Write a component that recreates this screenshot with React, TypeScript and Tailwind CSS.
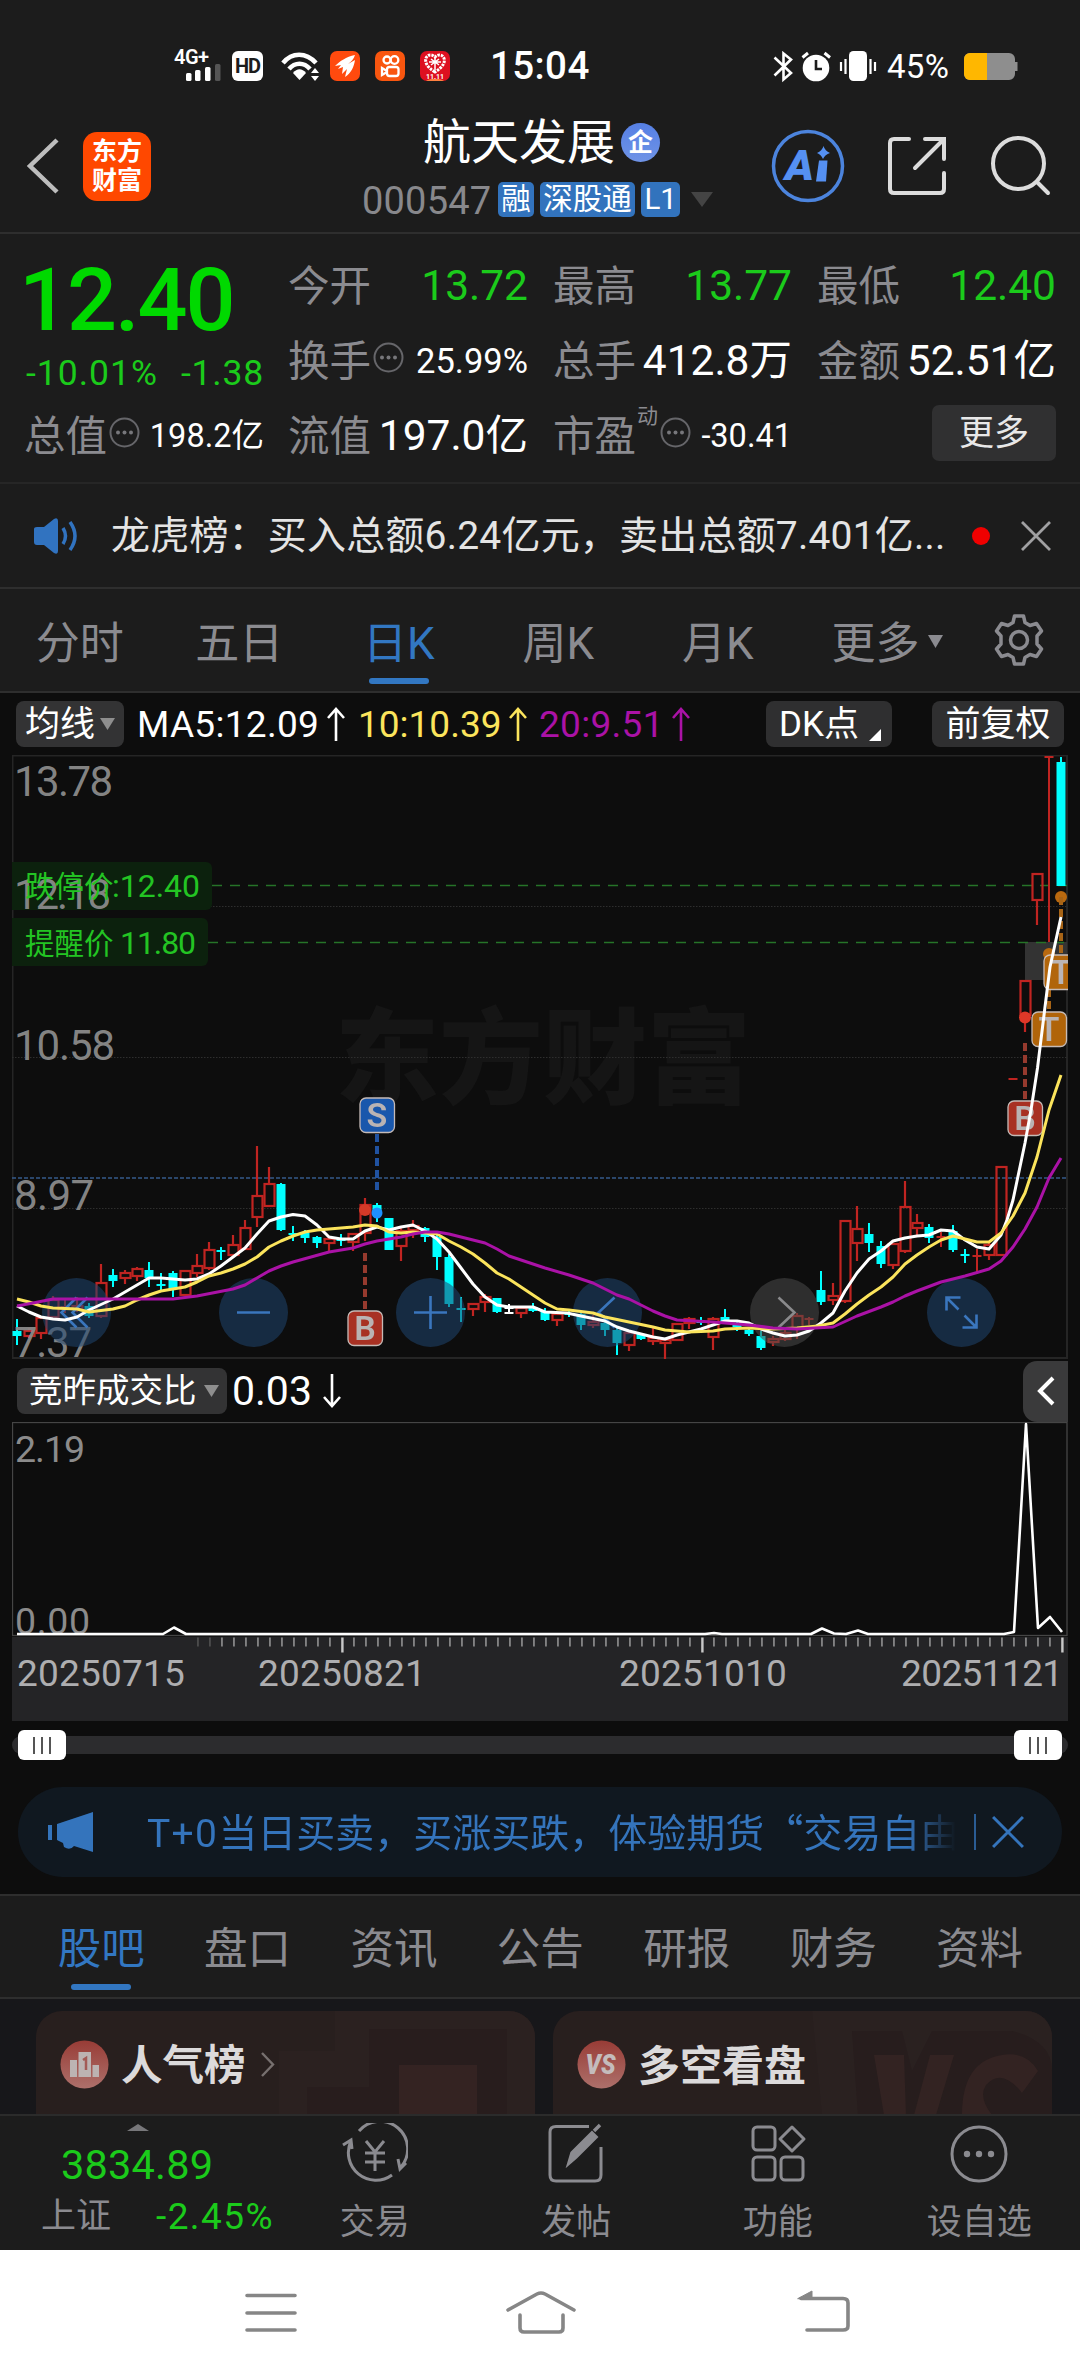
import type { ReactNode } from 'react';
import clsx from 'clsx';

type Kind = 'up' | 'down' | 'flat';
// index, kind, high, body top, body bottom, low
type Candle = [number, Kind, number, number, number, number];
type Point = [number, number];

const CANDLES: Candle[] = [
  [0, 'down', 1319, 1331, 1336, 1345],
  [1, 'up', 1328, 1331, 1336, 1338],
  [2, 'up', 1317, 1318, 1333, 1339],
  [3, 'up', 1296, 1300, 1317, 1318],
  [4, 'up', 1298, 1306, 1308, 1313],
  [5, 'up', 1297, 1306, 1309, 1312],
  [6, 'down', 1303, 1306, 1316, 1318],
  [7, 'up', 1264, 1283, 1316, 1318],
  [8, 'down', 1269, 1275, 1281, 1287],
  [9, 'up', 1270, 1273, 1278, 1284],
  [10, 'up', 1267, 1269, 1276, 1281],
  [11, 'down', 1262, 1270, 1278, 1287],
  [12, 'down', 1273, 1284, 1286, 1291],
  [13, 'down', 1271, 1273, 1289, 1297],
  [14, 'up', 1271, 1271, 1295, 1296],
  [15, 'up', 1254, 1266, 1273, 1277],
  [16, 'up', 1242, 1250, 1268, 1270],
  [17, 'down', 1247, 1250, 1252, 1260],
  [18, 'up', 1235, 1245, 1255, 1257],
  [19, 'up', 1220, 1228, 1249, 1249],
  [20, 'up', 1146, 1196, 1217, 1227],
  [21, 'up', 1167, 1184, 1206, 1207],
  [22, 'down', 1183, 1184, 1230, 1231],
  [23, 'down', 1226, 1233, 1235, 1241],
  [24, 'down', 1230, 1233, 1238, 1243],
  [25, 'down', 1236, 1237, 1243, 1248],
  [26, 'up', 1237, 1239, 1243, 1251],
  [27, 'down', 1234, 1239, 1241, 1246],
  [28, 'up', 1233, 1234, 1242, 1251],
  [29, 'up', 1198, 1205, 1233, 1241],
  [30, 'down', 1203, 1205, 1215, 1222],
  [31, 'down', 1218, 1218, 1250, 1250],
  [32, 'up', 1228, 1231, 1246, 1261],
  [33, 'up', 1220, 1226, 1230, 1238],
  [34, 'down', 1227, 1228, 1237, 1242],
  [35, 'down', 1235, 1237, 1257, 1270],
  [36, 'down', 1254, 1257, 1304, 1307],
  [37, 'down', 1297, 1308, 1310, 1322],
  [38, 'up', 1303, 1304, 1309, 1316],
  [39, 'up', 1294, 1297, 1302, 1312],
  [40, 'down', 1298, 1298, 1312, 1313],
  [41, 'flat', 1304, 1307, 1312, 1314],
  [42, 'up', 1307, 1308, 1313, 1318],
  [43, 'down', 1303, 1307, 1311, 1312],
  [44, 'down', 1308, 1311, 1320, 1321],
  [45, 'up', 1312, 1314, 1320, 1326],
  [46, 'down', 1310, 1313, 1314, 1317],
  [47, 'down', 1312, 1314, 1325, 1330],
  [48, 'up', 1315, 1322, 1325, 1328],
  [49, 'down', 1320, 1323, 1330, 1336],
  [50, 'down', 1328, 1330, 1343, 1355],
  [51, 'up', 1332, 1333, 1345, 1351],
  [52, 'down', 1333, 1334, 1339, 1340],
  [53, 'up', 1328, 1338, 1341, 1345],
  [54, 'up', 1339, 1340, 1343, 1359],
  [55, 'up', 1323, 1324, 1340, 1341],
  [56, 'up', 1317, 1319, 1323, 1329],
  [57, 'down', 1317, 1321, 1323, 1325],
  [58, 'up', 1317, 1319, 1337, 1350],
  [59, 'down', 1309, 1317, 1321, 1321],
  [60, 'down', 1322, 1325, 1326, 1331],
  [61, 'down', 1328, 1330, 1334, 1336],
  [62, 'down', 1331, 1336, 1348, 1350],
  [63, 'up', 1336, 1339, 1342, 1346],
  [64, 'up', 1330, 1333, 1339, 1341],
  [65, 'up', 1313, 1316, 1328, 1339],
  [66, 'up', 1317, 1318, 1319, 1325],
  [67, 'down', 1271, 1290, 1302, 1305],
  [68, 'up', 1283, 1296, 1300, 1305],
  [69, 'up', 1220, 1221, 1301, 1303],
  [70, 'up', 1206, 1229, 1243, 1261],
  [71, 'down', 1223, 1234, 1243, 1252],
  [72, 'down', 1241, 1246, 1264, 1268],
  [73, 'up', 1243, 1244, 1265, 1269],
  [74, 'up', 1181, 1207, 1251, 1253],
  [75, 'up', 1214, 1223, 1228, 1235],
  [76, 'down', 1224, 1227, 1238, 1243],
  [77, 'up', 1232, 1236, 1238, 1247],
  [78, 'down', 1225, 1231, 1250, 1252],
  [79, 'down', 1249, 1254, 1256, 1263],
  [80, 'up', 1249, 1255, 1257, 1274],
  [81, 'up', 1243, 1245, 1255, 1260],
  [82, 'up', 1166, 1167, 1255, 1256],
  [83, 'up', 1078, 1078, 1079, 1079],
  [84, 'up', 980, 981, 1015, 1032],
  [85, 'up', 873, 874, 900, 925],
  [86, 'up', 756, 756, 757, 942],
  [87, 'down', 757, 762, 886, 886],
];

const MA5: Point[] = [
  [17, 1306], [29, 1312], [41, 1317], [53, 1319], [65, 1320], [77, 1317], [89, 1310], [113, 1299],
  [137, 1285], [149, 1278], [161, 1278], [173, 1279], [185, 1280], [197, 1279], [209, 1274],
  [221, 1266], [233, 1257], [245, 1248], [257, 1234], [269, 1221], [281, 1217], [293, 1214.5],
  [305, 1216], [317, 1225], [329, 1237], [341, 1239], [353, 1239], [365, 1231], [377, 1227],
  [389, 1230], [401, 1227], [413, 1225], [425, 1231], [437, 1239], [449, 1252], [461, 1268],
  [473, 1284], [485, 1297], [497, 1305], [509, 1307], [533, 1307], [545, 1312], [567, 1313],
  [581, 1316], [605, 1321], [617, 1327], [629, 1331], [653, 1337], [665, 1339], [677, 1335],
  [689, 1332], [701, 1329], [713, 1325], [725, 1321], [737, 1321], [749, 1323], [761, 1329],
  [773, 1333], [785, 1336], [797, 1335], [809, 1331], [821, 1323], [833, 1313], [845, 1291],
  [857, 1273], [869, 1259], [881, 1251], [893, 1241], [905, 1238], [917, 1236], [929, 1235],
  [941, 1230], [953, 1231], [965, 1240], [977, 1247], [989, 1249], [1001, 1235], [1007, 1220],
  [1013, 1200], [1025, 1143], [1031, 1110], [1037.5, 1068], [1045, 1007], [1050, 967], [1061, 917],
];

const MA10: Point[] = [
  [17, 1299], [29, 1302], [41, 1306], [53, 1308], [77, 1309], [89, 1312], [113, 1309], [125, 1306],
  [137, 1300], [149, 1295], [161, 1291], [173, 1289], [185, 1287], [197, 1282], [209, 1276],
  [221, 1273], [233, 1269], [245, 1264], [257, 1257], [269, 1247], [281, 1241], [293, 1236],
  [305, 1232], [317, 1230], [353, 1227], [365, 1225], [377, 1226], [389, 1232], [401, 1233],
  [413, 1232], [437, 1234], [449, 1241], [461, 1247], [473, 1254], [485, 1263], [497, 1273],
  [509, 1279], [521, 1287], [533, 1295], [545, 1303], [557, 1309], [569, 1310], [593, 1313],
  [605, 1317], [629, 1322], [653, 1327], [665, 1330], [689, 1332], [713, 1331], [725, 1329],
  [749, 1328], [773, 1329], [797, 1328], [818, 1326], [833, 1323], [845, 1314], [857, 1304],
  [869, 1295], [881, 1287], [893, 1277], [905, 1264], [917, 1255], [929, 1247], [941, 1240],
  [953, 1236], [965, 1239], [977, 1242], [989, 1242], [1001, 1233], [1013, 1216], [1025, 1193],
  [1037, 1157], [1049, 1110], [1061, 1075],
];

const MA20: Point[] = [
  [17, 1306], [33, 1303], [53, 1299], [173, 1299], [197, 1296], [233, 1289], [245, 1285],
  [257, 1278], [269, 1271], [281, 1266], [293, 1262], [329, 1252], [353, 1248], [365, 1244],
  [377, 1241], [401, 1237], [413, 1234], [425, 1232], [437, 1232], [449, 1234], [485, 1243],
  [497, 1249], [509, 1256], [545, 1268], [569, 1275], [593, 1283], [617, 1295], [629, 1299],
  [653, 1311], [665, 1316], [677, 1320], [713, 1322], [725, 1323], [749, 1325], [773, 1328],
  [797, 1329], [833, 1327], [857, 1316], [881, 1307], [893, 1302], [905, 1296], [917, 1291],
  [941, 1282], [965, 1276], [989, 1269], [1001, 1261], [1013, 1247], [1025, 1229], [1037, 1207],
  [1049, 1178], [1061, 1158],
];

const RATIO: Point[] = [
  [17, 1634], [163, 1634], [174, 1627.5], [186, 1634], [705, 1634], [714, 1633], [722, 1634],
  [811, 1634], [822, 1628.5], [834, 1633.5], [846, 1634], [858, 1630.5], [868, 1634], [1004, 1634],
  [1014, 1632], [1026, 1424], [1038, 1628], [1050, 1617], [1062, 1632],
];

const toPoints = (pts: Point[]) => pts.map(p => p.join(',')).join(' ');

const COLORS: Record<Kind, string> = { up: '#c02421', down: '#00ffff', flat: '#ffffff' };

function CandleShape({ candle }: { candle: Candle }) {
  const [i, kind, high, top, bottom, low] = candle;
  const x = 17 + i * 12;
  const color = COLORS[kind];
  if (kind === 'down') {
    return (
      <g fill={color}>
        <rect x={x - 1} y={high} width={2} height={low - high} />
        <rect x={x - 4.5} y={top} width={9} height={Math.max(bottom - top, 2)} />
      </g>
    );
  }
  if (kind === 'flat' || bottom - top < 3) {
    return (
      <g fill={color}>
        <rect x={x - 1} y={high} width={2} height={low - high} />
        <rect x={x - 4.5} y={top} width={9} height={2} />
        {kind === 'flat' && <rect x={x - 4.5} y={bottom} width={9} height={2} />}
      </g>
    );
  }
  return (
    <g stroke={color} strokeWidth={2.2} fill="none">
      <path d={`M${x} ${high}V${top}M${x} ${bottom}V${low}`} />
      <rect x={x - 4.5} y={top} width={10} height={bottom - top} />
    </g>
  );
}

function Marker({ x, y, label, fill }: { x: number; y: number; label: string; fill: string }) {
  return (
    <g opacity={0.95}>
      <rect x={x - 17} y={y - 17} width={34.5} height={34.5} rx={6} fill={fill} stroke="#cfc4c0" strokeWidth={1.3} />
      <text x={x} y={y + 12} textAnchor="middle" fontSize={34} fontWeight={600} fill="#c3bcbc">{label}</text>
    </g>
  );
}

function RoundTool({ x, gray, d }: { x: number; gray?: boolean; d: string }) {
  return (
    <g>
      <circle cx={x} cy={1312.5} r={34.5} fill={gray ? '#4a4a4a' : '#1f4570'} opacity={0.55} />
      <path d={d} transform={`translate(${x} 1312.5)`} fill="none" stroke={gray ? '#8a8a8c' : '#3a76bd'} strokeWidth={2.6} />
    </g>
  );
}

const AXIS = [
  { y: 796, label: '13.78', width: 99 },
  { y: 909, label: '12.18', width: 97 },
  { y: 1060, label: '10.58', width: 101 },
  { y: 1210, label: '8.97', width: 80 },
  { y: 1357, label: '7.37', width: 78 },
];

function KLineChart() {
  return (
    <svg className="ml-3 block font-['Roboto','Noto_Sans_CJK_SC',sans-serif]" width={1056} height={605} viewBox="12 755 1056 605">
      <path d="M12.5 1358V755.5H1067V1358Z" fill="none" stroke="#252525" strokeWidth={2} />
      <text x={335} y={1096} fontSize={104} fontWeight={800} fill="#151515">东方财富</text>
      {[906.5, 1057.5, 1208.5].map(y => (
        <path key={y} d={`M12 ${y}H1067`} stroke="#2e2e2e" strokeDasharray="1.5 1.5" />
      ))}
      <path d="M12 1178H1066" stroke="#34598a" strokeDasharray="4 2" strokeWidth={1.4} />
      <rect x={1025} y={942} width={42} height={38} fill="#333333" />

      <path d="M12 862H206a6 6 0 0 1 6 6V904a6 6 0 0 1 -6 6H12Z" fill="#0c210d" />
      <path d="M12 918H202a6 6 0 0 1 6 6V960a6 6 0 0 1 -6 6H12Z" fill="#0c210d" />
      <path d="M212 885.5H1067M208 942.5H1067" stroke="#267328" strokeWidth={1.6} strokeDasharray="10 8" />

      {CANDLES.map(c => <CandleShape key={c[0]} candle={c} />)}

      <circle cx={365} cy={1210} r={6} fill="#d63a28" />
      <circle cx={377} cy={1213} r={5.5} fill="#1e90ff" />
      <circle cx={1025} cy={1017.5} r={6} fill="#e03828" />
      <circle cx={1061} cy={897} r={6} fill="#b9690f" />
      <circle cx={1049} cy={954} r={6} fill="#b9690f" />
      <g fill="none" strokeWidth={4} strokeDasharray="8 4">
        <path d="M377 1134V1190" stroke="#2052a0" />
        <path d="M365 1253V1310" stroke="#963a2e" />
        <path d="M1025 1043V1100" stroke="#963a2e" />
        <path d="M1061 897V954M1049 989V1012" stroke="#a76416" />
      </g>

      {AXIS.map(a => (
        <text key={a.label} x={14} y={a.y} fontSize={42} fill="#8b8b8b" fillOpacity={0.95} textLength={a.width}>{a.label}</text>
      ))}
      <g fontSize={29.5} fill="#23c423">
        <text x={25} y={896.5}>跌停价</text>
        <text x={112} y={896.5} fontSize={32} textLength={88}>:12.40</text>
        <text x={25} y={953.5}>提醒价</text>
        <text x={120} y={953.5} fontSize={32} textLength={76}>11.80</text>
      </g>

      <Marker x={377} y={1115} label="S" fill="#1a5bb5" />
      <Marker x={365} y={1328} label="B" fill="#b13325" />
      <Marker x={1025} y={1118} label="B" fill="#b13325" />
      <Marker x={1061} y={972} label="T" fill="#b9690a" />
      <Marker x={1049} y={1029} label="T" fill="#b9690a" />

      <RoundTool x={76.5} d="M0 -15L-15 0L0 15M11 -15L-4 0L11 15" />
      <RoundTool x={253.5} d="M-16.5 0H16.5" />
      <RoundTool x={430.5} d="M-16.5 0H16.5M0 -16.5V16.5" />
      <RoundTool x={607.5} d="M7 -15L-9 0L7 15" />
      <RoundTool x={784.5} gray d="M-6 -15L10 0L-6 15" />
      <RoundTool x={961.5} d="M-15 -2V-15H-1M-15 -15L-3 -3M15 2V15H1M15 15L3 3" />

      <g fill="none" strokeWidth={3} strokeLinejoin="round">
        <polyline points={toPoints(MA5)} stroke="#ffffff" />
        <polyline points={toPoints(MA10)} stroke="#fbe45c" />
        <polyline points={toPoints(MA20)} stroke="#aa12a6" />
      </g>
    </svg>
  );
}

function RatioChart() {
  return (
    <svg className="ml-3 block font-['Roboto',sans-serif]" width={1056} height={215} viewBox="12 1422 1056 215">
      <rect x={12.5} y={1422.5} width={1054.5} height={213} fill="none" stroke="#454545" strokeWidth={1.3} />
      <text x={15} y={1462} fontSize={37.5} fill="#8b8b8b" textLength={70}>2.19</text>
      <text x={15} y={1634} fontSize={37.5} fill="#8b8b8b" textLength={75}>0.00</text>
      <polyline points={toPoints(RATIO)} fill="none" stroke="#ffffff" strokeWidth={2.6} strokeLinejoin="round" />
    </svg>
  );
}

function TimeAxis() {
  const ticks = Array.from({ length: 73 }, (_, k) => 1062 - 12 * k);
  return (
    <div className="ml-3 h-[84px] w-[1056px] bg-[#242426]">
      <svg className="block" width={1056} height={16} viewBox="12 1637 1056 16">
        {ticks.map((x, k) => (
          <rect key={x} x={x - 0.8} y={1637.5} width={k % 30 === 0 ? 2.4 : 1.5} height={k % 30 === 0 ? 15 : 9}
            fill={k % 30 === 0 ? '#c8c8c8' : k > 70 ? '#555555' : '#9a9a9a'} />
        ))}
      </svg>
      <div className="flex h-[40px] items-center pl-[5px] text-[37px] leading-none tracking-[0.2px] text-[#aeaeb0]">
        <span className="w-[241px]">20250715</span>
        <span className="w-[361px]">20250821</span>
        <span className="w-[282px]">20251010</span>
        <span className="tracking-[-0.6px]">20251121</span>
      </div>
    </div>
  );
}

function RangeSlider() {
  const handle = (
    <span className="flex h-[30px] w-12 items-center justify-center gap-[6px] rounded-[6px] bg-white">
      <i className="h-[17px] w-[2px] bg-[#555]" />
      <i className="h-[17px] w-[2px] bg-[#555]" />
      <i className="h-[17px] w-[2px] bg-[#555]" />
    </span>
  );
  return (
    <div className="mx-3 mt-[9px] flex h-[30px] items-center">
      <div className="flex h-[18px] w-full items-center justify-between rounded-full bg-[#2c2c2e] px-[6px]">
        {handle}
        {handle}
      </div>
    </div>
  );
}

function StatusBar() {
  return (
    <div className="flex h-[100px] items-start pl-[173px] pt-[48px] text-white">
      <svg width={50} height={34} viewBox="173 48 50 34" fill="#fff">
        <text x={174} y={64} fontSize={20} fontWeight={600} textLength={35} className="font-['Roboto',sans-serif]">4G+</text>
        <rect x={186} y={73} width={5.5} height={8} rx={1.5} />
        <rect x={195} y={70} width={5.5} height={11} rx={1.5} />
        <rect x={205} y={67} width={5.5} height={14} rx={1.5} />
        <rect x={215} y={64} width={5.5} height={17} rx={1.5} fill="#555" />
      </svg>
      <span className="ml-[9px] mt-[3px] flex h-[30px] w-[31px] items-center justify-center rounded-[6px] bg-white text-[20px] font-bold leading-none tracking-[-1px] text-[#1c1c1c]">HD</span>
      <svg className="ml-[18px] mt-[4px]" width={39} height={29} viewBox="0 0 39 29" fill="none" stroke="#fff" strokeWidth={4.5}>
        <path d="M2 11C11 0 25 0 35 11" />
        <path d="M8 17C14 10 23 10 29 17" />
        <path d="M12 21C16 16 21 16 25 21L18.5 28Z" fill="#fff" stroke="none" />
        <path d="M34 16L38 21H30ZM34 29L38 24H30Z" fill="#fff" stroke="none" />
      </svg>
      <svg className="ml-[10px] mt-[3px]" width={30} height={30} viewBox="0 0 30 30">
        <rect width={30} height={30} rx={7} fill="#ff4a0e" />
        <path d="M5 15C10 10 16 6 25 4C24 8 21 11 18 13L25 9C24 16 21 22 15 26L17 18L12 23L13 16L8 18L11 14Z" fill="#fff" />
      </svg>
      <svg className="ml-[15px] mt-[3px]" width={30} height={30} viewBox="0 0 30 30" fill="none" stroke="#fff" strokeWidth={2.3}>
        <rect width={30} height={30} rx={7} fill="#f9560f" stroke="none" />
        <circle cx={12} cy={9} r={3.5} />
        <circle cx={19.5} cy={9} r={3.8} />
        <rect x={12} y={16} width={11.5} height={9} rx={2.5} />
        <path d="M12 20L7 17V24L12 21" />
      </svg>
      <svg className="ml-[15px] mt-[3px]" width={30} height={30} viewBox="0 0 30 30">
        <rect width={30} height={30} rx={7} fill="#dd1020" />
        <path d="M6 30C10 27 20 27 24 30Z" fill="#ff8040" />
        <path d="M15 21C-2 11 8 -1 15 6C22 -1 32 11 15 21Z" fill="none" stroke="#fff" strokeWidth={3} strokeDasharray="2.5 1" />
        <path d="M11 8L19 14M19 8L11 14M15 6V19M9 11H21" stroke="#fff" strokeWidth={1.5} />
        <text x={15} y={28} textAnchor="middle" fontSize={7} fontWeight={700} fill="#fff">11.11</text>
      </svg>
      <span className="ml-[40px] mt-[-1px] w-[98px] whitespace-nowrap text-[38.5px] font-medium leading-[38px] tracking-[0.4px]">15:04</span>
      <svg className="ml-[185px] mt-[3px]" width={104} height={32} viewBox="774 51 104 32" fill="none" stroke="#fff" strokeWidth={2.6}>
        <path d="M775.5 57.5L792 73L784.5 79.5V53.5L792 59.5L775.5 75.5" />
        <circle cx={817} cy={68} r={13.3} fill="#fff" stroke="none" />
        <path d="M803.500 57.500L809 53M831 57.500L825.500 53" strokeWidth={3} />
        <path d="M817 60V69H823" stroke="#1c1c1c" />
        <rect x={850} y={51} width={18} height={30} rx={4.5} fill="#fff" stroke="none" />
        <path d="M842 62V71M846.500 59V74M871.500 59V74M876 62V71" strokeWidth={2.200} />
      </svg>
      <span className="ml-[10px] mt-[3px] w-[65px] whitespace-nowrap text-[33px] leading-[32px] tracking-[0.3px]">45%</span>
      <svg className="ml-[12px] mt-[5px]" width={54} height={27} viewBox="0 0 54 27">
        <path d="M6 0H45a6 6 0 0 1 6 6V9H53.500V18H51V21a6 6 0 0 1 -6 6H6a6 6 0 0 1 -6 -6V6a6 6 0 0 1 6 -6Z" fill="#8e8e8e" />
        <path d="M6 0H23V27H6a6 6 0 0 1 -6 -6V6a6 6 0 0 1 6 -6Z" fill="#ffb700" />
      </svg>
    </div>
  );
}

function Tag({ children }: { children: ReactNode }) {
  return (
    <span className="flex h-[35px] items-center whitespace-nowrap rounded-[5px] bg-[#3273bd] px-[3px] text-[29.5px] leading-none text-white">{children}</span>
  );
}

function Header() {
  return (
    <header className="flex h-[134px] items-center border-b-2 border-[#2e2e2e]">
      <svg className="ml-[26px] shrink-0" width={34} height={56} viewBox="0 0 34 56" fill="none" stroke="#bdbdbd" strokeWidth={4.5}>
        <path d="M31 2L4 28L31 54" />
      </svg>
      <div className="ml-[23px] flex h-[69px] w-[68px] shrink-0 flex-col items-center justify-center rounded-[14px] bg-[#ff4800] text-[25px] font-bold leading-[29px] text-white">
        <span>东方</span>
        <span>财富</span>
      </div>
      <div className="ml-[211px] flex w-[352px] shrink-0 flex-col">
        <div className="flex h-[56px] items-center pl-[61px]">
          <span className="text-[48px] leading-none text-white">航天发展</span>
          <span className="ml-[6px] flex h-[39px] w-[39px] items-center justify-center rounded-full bg-gradient-to-b from-[#5680e4] to-[#6f93e6] text-[25px] font-bold leading-none text-white">企</span>
        </div>
        <div className="mt-[11px] flex h-[36px] items-center">
          <span className="mt-[2px] text-[38px] leading-none tracking-[0.2px] text-[#88888c]">000547</span>
          <span className="ml-[7px] flex shrink-0 gap-[6.5px]">
            <Tag>融</Tag>
            <Tag>深股通</Tag>
            <Tag>L1</Tag>
          </span>
          <svg className="ml-[11px] shrink-0" width={22} height={16} viewBox="0 0 22 16"><path d="M0 0H22L11 15Z" fill="#444" /></svg>
        </div>
      </div>
      <svg className="ml-[57px] shrink-0" width={74} height={74} viewBox="0 0 74 74">
        <circle cx={37} cy={37} r={34.500} fill="none" stroke="#4c84dd" strokeWidth={3.5} />
        <text x={14} y={51} fontSize={42} fontWeight={900} fontStyle="italic" fill="#5590f2" textLength={29} lengthAdjust="spacingAndGlyphs" className="font-['Roboto',sans-serif]">A</text>
        <path d="M48 31.500H56.500L55 52.500H45Z" fill="#5590f2" />
        <path d="M52.500 17Q54 22 59 24Q54 25.500 52 30Q50 25.500 46 24Q51 22 52.500 17Z" fill="#5590f2" />
      </svg>
      <svg className="ml-[43px] shrink-0" width={58} height={58} viewBox="0 0 58 58" fill="none" stroke="#dcdcdc" strokeWidth={4} strokeLinecap="round">
        <path d="M21 2H6Q2 2 2 6V52Q2 56 6 56H52Q56 56 56 52V36" />
        <path d="M37 2H56V22M55 3L27 31" />
      </svg>
      <svg className="ml-[45px] shrink-0" width={62} height={62} viewBox="0 0 62 62" fill="none" stroke="#dcdcdc" strokeWidth={4} strokeLinecap="round">
        <circle cx={27.5} cy={28.5} r={25.5} />
        <path d="M46 47L57 58" />
      </svg>
    </header>
  );
}

function Info() {
  return (
    <svg className="mb-[8px] ml-[2px] shrink-0" width={31} height={31} viewBox="0 0 31 31">
      <circle cx={15.5} cy={15.5} r={14} fill="none" stroke="#66666a" strokeWidth={2} />
      <g fill="#77777b">
        <circle cx={9} cy={15.5} r={2} />
        <circle cx={15.5} cy={15.5} r={2} />
        <circle cx={22} cy={15.5} r={2} />
      </g>
    </svg>
  );
}

interface StatProps {
  label: string;
  value?: string;
  info?: boolean;
  sup?: string;
  tone?: 'green' | 'white';
  size?: 'lg' | 'md' | 'sm';
}

const SIZES = { lg: 'text-[42.5px]', md: 'text-[34.5px]', sm: 'text-[32.5px]' };

function Stat({ label, value, info, sup, tone = 'white', size = 'lg' }: StatProps) {
  return (
    <div className="flex h-[75px] items-center whitespace-nowrap leading-none">
      <span className="text-[41.5px] text-[#8b8b90]">{label}</span>
      {sup && <span className="mb-[40px] ml-[1px] text-[21px] text-[#8b8b90]">{sup}</span>}
      {info && <Info />}
      <span className={clsx('ml-auto', SIZES[size], tone === 'green' ? 'text-[#1bcb1b]' : 'text-white')}>
        {value}
      </span>
    </div>
  );
}

function Quote() {
  return (
    <section className="flex h-[250px] border-b-2 border-[#262626] pl-[24px] pt-[15px]">
      <div className="w-[240px]">
        <div className="h-[150px] leading-none">
          <div className="ml-[-5px] pt-[7px] text-[88px] font-medium tracking-[-2px] text-[#00d900]">12.40</div>
          <div className="mt-[12px] flex justify-between whitespace-nowrap pl-[2px] text-[35.5px] text-[#1bcb1b]">
            <span className="tracking-[1px]">-10.01%</span>
            <span className="tracking-[0.8px]">-1.38</span>
          </div>
        </div>
        <Stat label="总值" info value="198.2亿" size="sm" />
      </div>
      <div className="ml-[24px] w-[240px]">
        <Stat label="今开" value="13.72" tone="green" />
        <Stat label="换手" info value="25.99%" size="md" />
        <Stat label="流值" value="197.0亿" />
      </div>
      <div className="ml-[25px] w-[239px]">
        <Stat label="最高" value="13.77" tone="green" />
        <Stat label="总手" value="412.8万" />
        <Stat label="市盈" sup="动" info value="-30.41" size="sm" />
      </div>
      <div className="ml-[25px] w-[239px]">
        <Stat label="最低" value="12.40" tone="green" />
        <Stat label="金额" value="52.51亿" />
        <button className="ml-auto mt-[6px] flex h-[56px] w-[124px] items-center justify-center rounded-[7px] bg-[#303031] text-[35px] leading-none text-[#e8e8e8]">更多</button>
      </div>
    </section>
  );
}

function Cross({ size, color }: { size: number; color: string }) {
  return (
    <svg className="shrink-0" width={size} height={size} viewBox="0 0 30 30">
      <path d="M1 1L29 29M29 1L1 29" stroke={color} strokeWidth={2.8} />
    </svg>
  );
}

function NewsTicker() {
  return (
    <section className="flex h-[105px] items-center border-b-2 border-[#2e2e2e] pl-[34px]">
      <svg className="shrink-0" width={46} height={36} viewBox="0 0 46 36">
        <path d="M0 11Q0 9 3 9H10L20 1Q24 -1 24 3V33Q24 37 20 35L10 27H3Q0 27 0 24Z" fill="#3173c0" />
        <path d="M29 10Q34 18 29 26M36 4Q46 18 36 32" fill="none" stroke="#3173c0" strokeWidth={3.5} />
      </svg>
      <span className="ml-[31px] mt-[2px] w-[861px] whitespace-nowrap text-[39px] leading-none tracking-[0.2px] text-[#e4e4e4]">龙虎榜：买入总额6.24亿元，卖出总额7.401亿...</span>
      <span className="h-[18px] w-[18px] shrink-0 rounded-full bg-[#f00000]" />
      <span className="ml-[31px]"><Cross size={30} color="#a0a0a2" /></span>
    </section>
  );
}

const PERIODS = ['分时', '五日', '日K', '周K', '月K'];

function PeriodTabs() {
  return (
    <nav className="flex h-[104px] border-b-2 border-[#2e2e2e] text-[44px] leading-none text-[#8b8b90]">
      {PERIODS.map(p => (
        <div key={p} className={clsx('flex w-[159.5px] shrink-0 flex-col items-center pt-[33px]', p === '日K' && 'text-[#3277c2]')}>
          <span>{p}</span>
          {p === '日K' && <i className="mt-[12px] h-[6px] w-[60px] rounded-full bg-[#3277c2]" />}
        </div>
      ))}
      <div className="flex pl-[34px] pt-[33px]">
        <span>更多</span>
        <svg className="ml-[8px] mt-[13px]" width={15} height={13} viewBox="0 0 15 13"><path d="M0 0H15L7.5 13Z" fill="#8b8b90" /></svg>
      </div>
      <svg className="ml-[50px] mt-[25px]" width={52} height={52} viewBox="0 0 52 52" fill="none" stroke="#8b8b90" strokeWidth={3.5} strokeLinejoin="round">
        <path d="M21.5 2H30.5L32 8.5L37 11.5L43.5 9.5L48.5 17L44 22V30L48.5 35L43.5 42.5L37 40.5L32 43.5L30.5 50H21.5L20 43.5L15 40.5L8.5 42.5L3.5 35L8 30V22L3.5 17L8.5 9.5L15 11.5L20 8.5Z" />
        <circle cx={26} cy={26} r={8.5} />
      </svg>
    </nav>
  );
}

function Arrow({ color, down }: { color: string; down?: boolean }) {
  return (
    <svg className={clsx('shrink-0', down && 'rotate-180')} width={18} height={34} viewBox="0 0 18 34" fill="none" stroke={color} strokeWidth={2.6}>
      <path d="M9 34V2M1 11L9 2L17 11" />
    </svg>
  );
}

function MaBar() {
  return (
    <div className="flex h-[62px] items-center pl-4 text-[37px] leading-none">
      <div className="flex h-[46px] w-[108px] items-center rounded-[8px] bg-[#333334] pl-[9px] text-[35px] text-white">
        均线
        <svg className="ml-[5px]" width={15} height={12} viewBox="0 0 15 12"><path d="M0 0H15L7.5 12Z" fill="#8e8e8e" /></svg>
      </div>
      <div className="ml-[13px] flex w-[221px] items-center gap-[8px] text-white"><span className="tracking-[0.3px]">MA5:12.09</span><Arrow color="#fff" /></div>
      <div className="flex w-[181px] items-center gap-[8px] text-[#fbe45c]"><span>10:10.39</span><Arrow color="#fbe45c" /></div>
      <div className="flex w-[227px] items-center gap-[8px] text-[#aa12a6]"><span className="tracking-[0.3px]">20:9.51</span><Arrow color="#aa12a6" /></div>
      <div className="flex h-[46px] w-[126px] items-center rounded-[8px] bg-[#2f2f30] pl-[13px] text-[35px] text-white">
        DK点
        <svg className="ml-[10px] mt-[22px]" width={12} height={12} viewBox="0 0 12 12"><path d="M12 0V12H0Z" fill="#fff" /></svg>
      </div>
      <div className="ml-[40px] flex h-[46px] w-[132px] items-center justify-center rounded-[8px] bg-[#2f2f30] text-[35px] text-white">前复权</div>
    </div>
  );
}

function RatioBar() {
  return (
    <div className="flex h-[62px] items-center pl-[17px] leading-none text-white">
      <div className="flex h-[46px] w-[210px] items-center rounded-[8px] bg-[#333334] pl-[12px] text-[33.5px]">
        竞昨成交比
        <svg className="ml-[7px]" width={15} height={12} viewBox="0 0 15 12"><path d="M0 0H15L7.5 12Z" fill="#8e8e8e" /></svg>
      </div>
      <span className="ml-[5px] mr-[11px] text-[41px]">0.03</span>
      <Arrow color="#fff" down />
      <div className="ml-auto mr-3 flex h-[61px] w-[45px] items-center justify-center rounded-l-[14px] bg-[#3a3a3b]">
        <svg width={18} height={30} viewBox="0 0 18 30"><path d="M16 2L3 15L16 28" fill="none" stroke="#fff" strokeWidth={4} /></svg>
      </div>
    </div>
  );
}

function Banner() {
  return (
    <div className="mx-[18px] mt-[27px] flex h-[90px] items-center rounded-full bg-[#101820] pl-[30px] leading-none text-[#3474bc]">
      <svg className="shrink-0" width={46} height={40} viewBox="0 0 46 40" fill="#3474bc">
        <path d="M0 13H4V28H0ZM9 12L45 0V40L26 34Q22 39 16 35L15 31L9 28Z" />
      </svg>
      <div className="ml-[53px] w-[809px] overflow-hidden whitespace-nowrap bg-gradient-to-r from-[#3474bc] from-94% to-[#101820] bg-clip-text text-[39px] leading-[50px] text-transparent">
        <span className="tracking-[1.3px]">T+0</span>当日买卖，买涨买跌，体验期货<span className="font-['Noto_Sans_CJK_SC',sans-serif]">“</span>交易自由
      </div>
      <i className="ml-[18px] h-[36px] w-[2px] bg-[#2a5c94]" />
      <span className="ml-[16px]"><Cross size={32} color="#3474bc" /></span>
    </div>
  );
}

const SECTIONS = ['股吧', '盘口', '资讯', '公告', '研报', '财务', '资料'];

function SectionTabs() {
  return (
    <nav className="mt-[17px] flex h-[105px] border-y-2 border-[#2e2e2e] bg-[#1c1c1c] pl-[28px] text-[43.5px] leading-none text-[#8b8b90]">
      {SECTIONS.map((s, i) => (
        <div key={s} className={clsx('flex w-[146.4px] shrink-0 flex-col items-center pt-[32px]', i === 0 && 'text-[#3277c2]')}>
          <span>{s}</span>
          {i === 0 && <i className="mt-[12px] h-[6px] w-[60px] rounded-full bg-[#3277c2]" />}
        </div>
      ))}
    </nav>
  );
}

function Cards() {
  return (
    <section className="flex h-[115px] gap-[18px] overflow-hidden bg-[#17171a] pl-[36px] pt-[12px]">
      <div className="relative flex h-[160px] w-[499px] overflow-hidden rounded-[26px] bg-[#281f1e] pl-[24px] pt-[29px]">
        <svg className="absolute right-0 top-0" width={270} height={104} viewBox="0 0 270 104">
          <path d="M14 104V40H70V0H270V104Z" fill="#2b2120" />
          <path d="M42 104V76H104V18H242V104Z" fill="#281d1d" />
          <path d="M134 54H212V104H134Z" fill="#342322" />
        </svg>
        <svg className="shrink-0" width={49} height={49} viewBox="0 0 49 49">
          <circle cx={24.5} cy={24.5} r={24} fill="url(#badge)" />
          <defs>
            <linearGradient id="badge" x1="0" y1="0" x2="0" y2="1">
              <stop offset="0" stopColor="#983c36" />
              <stop offset="1" stopColor="#ad706b" />
            </linearGradient>
          </defs>
          <path d="M10 20H17V37H10ZM18.5 12H31V37H18.5ZM32.5 25H39V37H32.5Z" fill="#bcb3b2" />
          <path d="M23 20L26 18V30" fill="none" stroke="#a35a55" strokeWidth={2.5} />
        </svg>
        <span className="z-10 ml-[12px] mt-[5px] text-[41.5px] font-bold leading-none text-[#dcdadb]">人气榜</span>
        <svg className="z-10 ml-[14px] mt-[12px]" width={15} height={25} viewBox="0 0 15 25"><path d="M2 1L13 12.5L2 24" fill="none" stroke="#77706f" strokeWidth={2.4} /></svg>
      </div>
      <div className="relative flex h-[160px] w-[499px] overflow-hidden rounded-[26px] bg-[#281f1e] pl-[24px] pt-[29px]">
        <svg className="absolute right-0 top-0" width={240} height={104} viewBox="0 0 240 104">
          <path d="M0 0H240V104H10Z" fill="#2a2120" />
          <path d="M40 20H90L100 60L120 20H200Q240 30 240 60V104H46Z" fill="#271d1d" />
          <path d="M62 44H92L94 104H72ZM118 44H142L124 104H102ZM150 104Q150 50 190 44Q214 40 226 60L210 82Q190 56 174 74Q166 86 180 104Z" fill="#332322" />
        </svg>
        <svg className="shrink-0" width={49} height={49} viewBox="0 0 49 49">
          <circle cx={24.5} cy={24.5} r={24} fill="url(#badge)" />
          <text x={23.5} y={34} textAnchor="middle" fontSize={27} fontWeight={900} fontStyle="italic" fill="#c4bcbc" textLength={30} lengthAdjust="spacingAndGlyphs">VS</text>
        </svg>
        <span className="z-10 ml-[12px] mt-[6px] text-[42px] font-bold leading-none text-[#dcdadb]">多空看盘</span>
      </div>
    </section>
  );
}

function DockItem({ label, children }: { label: string; children: ReactNode }) {
  return (
    <div className="flex w-[201.5px] flex-col items-center">
      <svg className="mt-[7px]" width={66} height={62} viewBox="0 0 66 62" fill="none" stroke="#8b8b90" strokeWidth={3}>{children}</svg>
      <span className="mt-[20px]">{label}</span>
    </div>
  );
}

function Dock() {
  return (
    <footer className="flex h-[136px] border-t-2 border-[#2b2b2b] bg-[#1c1c1c] text-[35px] leading-none text-[#8b8b90]">
      <div className="w-[274px] shrink-0">
        <svg className="ml-[127px] mt-[8px]" width={22} height={7} viewBox="0 0 22 7"><path d="M11 0L22 7H0Z" fill="#77777a" /></svg>
        <div className="ml-[61px] mt-[13px] text-[41.5px] tracking-[0.2px] text-[#1bcb1b]">3834.89</div>
        <div className="mt-[12px] flex items-center whitespace-nowrap pl-[41px]">
          <span>上证</span>
          <span className="ml-[45px] text-[37px] tracking-[1.4px] text-[#1bcb1b]">-2.45%</span>
        </div>
      </div>
      <DockItem label="交易">
        <path d="M17 8A27.5 27.5 0 0 1 59 44M50 52A27.5 27.5 0 0 1 9 18M1 22L9 17L10 26M64 40L58 46L56 36" />
        <path d="M24 18L33 29L42 18M33 29V48M23 30H43M23 39H43" />
      </DockItem>
      <DockItem label="发帖">
        <path d="M46 3.5H13Q7 3.5 7 9V52Q7 58 13 58H52Q58 58 58 52V24" />
        <path d="M26 40L29 30L49 10L53 14L33 34ZM51 8L57 2" fill="#8b8b90" strokeWidth={3.5} />
      </DockItem>
      <DockItem label="功能">
        <rect x={8} y={4} width={22} height={23} rx={4} />
        <rect x={8} y={34} width={22} height={23} rx={4} />
        <rect x={36} y={34} width={22} height={23} rx={4} />
        <path d="M47 4L59 16L47 28L35 16Z" strokeLinejoin="round" />
      </DockItem>
      <DockItem label="设自选">
        <circle cx={33} cy={31} r={27} />
        <g fill="#8b8b90" stroke="none">
          <circle cx={21} cy={31} r={3.2} />
          <circle cx={33} cy={31} r={3.2} />
          <circle cx={45} cy={31} r={3.2} />
        </g>
      </DockItem>
    </footer>
  );
}

function SystemNav() {
  return (
    <div className="flex h-[126px] bg-white pt-[38px]">
      <svg className="ml-[244px]" width={54} height={48} viewBox="0 0 54 48" stroke="#868686" strokeWidth={3.6} strokeLinecap="round">
        <path d="M3 7.5H51M3 25H51M3 42H51" />
      </svg>
      <svg className="ml-[206px]" width={74} height={48} viewBox="0 0 74 48" fill="none" stroke="#868686" strokeWidth={3.6} strokeLinecap="round" strokeLinejoin="round">
        <path d="M4 22L33 6Q37 4 41 6L70 22M16 27V40Q16 44 20 44H55Q59 44 59 40V27" />
      </svg>
      <svg className="ml-[219px]" width={56} height={48} viewBox="0 0 56 48" fill="none" stroke="#868686" strokeWidth={3.6} strokeLinecap="round">
        <path d="M4 10.5H46Q51 10.5 51 15V38Q51 42 46 42H10" />
        <path d="M1 10.5L15 3V11Z" fill="#868686" strokeWidth={1} />
      </svg>
    </div>
  );
}

export default function App() {
  return (
    <div className="h-[2376px] w-[1080px] overflow-hidden bg-[#0d0d0d] font-['Roboto','Noto_Sans_CJK_SC',sans-serif]">
      <div className="bg-[#1c1c1c]">
        <StatusBar />
        <Header />
        <Quote />
        <NewsTicker />
        <PeriodTabs />
      </div>
      <MaBar />
      <KLineChart />
      <RatioBar />
      <RatioChart />
      <TimeAxis />
      <RangeSlider />
      <Banner />
      <SectionTabs />
      <Cards />
      <Dock />
      <SystemNav />
    </div>
  );
}
